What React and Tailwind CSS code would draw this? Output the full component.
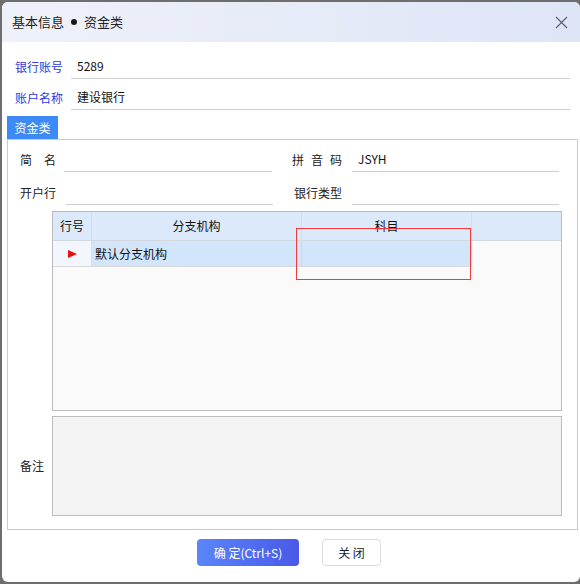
import React from "react";

const font = { fontFamily: '"Noto Sans CJK SC", "Noto Sans", sans-serif' };

const TopField = ({ label, value }) => (
  <div className="flex items-stretch h-[25px] pl-[13px] pr-[10px]">
    <div className="w-[56px] flex items-center text-[12px] text-[#3338e0]">{label}</div>
    <div className="flex-1 flex items-center pl-[6px] text-[12px] text-[#111] border-b border-[#cfcfcf]">{value}</div>
  </div>
);

const PanelField = ({ label, value, labelW, lineW }) => (
  <div className="flex items-stretch">
    <div className="flex items-center text-[12px] text-[#222] whitespace-nowrap" style={{ width: labelW }}>
      {label}
    </div>
    <div
      className="flex items-center pl-[6px] text-[12px] text-[#111] border-b border-[#cfcfcf]"
      style={{ width: lineW }}
    >
      {value}
    </div>
  </div>
);

export default function App() {
  return (
    <div className="w-[580px] h-[584px] bg-[#6e6e6e] pt-[2px] pl-[2px] overflow-hidden" style={font}>
      <div className="w-[578px] h-[580px] bg-white rounded-[6px] flex flex-col overflow-hidden">
        {/* header */}
        <div className="h-[40px] shrink-0 flex items-center justify-between pl-[10px] pr-[12px] bg-gradient-to-r from-[#eff1fa] to-[#dee5f6]">
          <span className="flex items-center text-[13px] text-[#222]">
            基本信息
            <span className="inline-block w-[6px] h-[6px] rounded-full bg-[#1a1a1a] mx-[7px]" />
            资金类
          </span>
          <svg width="13" height="13" viewBox="0 0 13 13" className="mt-[1px]">
            <path d="M1 1 L12 12 M12 1 L1 12" stroke="#5a5f70" strokeWidth="1.1" />
          </svg>
        </div>

        <div className="mt-[12px]">
          <TopField label="银行账号" value="5289" />
        </div>
        <div className="mt-[6px]">
          <TopField label="账户名称" value="建设银行" />
        </div>

        {/* tab */}
        <div className="mt-[6px] ml-[5px] w-[51px] h-[23px] bg-[#3d8af7] text-white text-[12px] flex items-center justify-center">
          资金类
        </div>

        {/* panel */}
        <div className="ml-[5px] w-[571px] h-[391px] border border-[#cccccc] pl-[12px] pt-[7px]">
          <div className="flex h-[25px]">
            <PanelField label="简　名" labelW={44} lineW={208} />
            <div className="w-[20px]" />
            <PanelField
              label={
                <span className="flex gap-[7px]">
                  <span>拼</span>
                  <span>音</span>
                  <span>码</span>
                </span>
              }
              value="JSYH"
              labelW={60}
              lineW={207}
            />
          </div>
          <div className="flex h-[25px] mt-[8px]">
            <PanelField label="开户行" labelW={46} lineW={207} />
            <div className="w-[21px]" />
            <PanelField label="银行类型" labelW={58} lineW={207} />
          </div>

          {/* grid */}
          <div className="relative mt-[6px] ml-[32px] w-[510px] h-[200px] border border-[#bcbcbc] bg-[#fafafa] text-[12px] text-[#111]">
            <div className="flex h-[29px] bg-[#dce9fa] border-b border-[#d2d8e0]">
              <div className="w-[39px] flex items-center justify-center border-r border-[#d6dde6]">行号</div>
              <div className="w-[210px] flex items-center justify-center border-r border-[#d6dde6]">分支机构</div>
              <div className="w-[170px] flex items-center justify-center border-r border-[#d6dde6]">科目</div>
              <div className="flex-1" />
            </div>
            <div className="flex h-[26px] border-b border-[#d9d9d9] w-[420px]">
              <div className="w-[39px] flex items-center justify-center bg-[#f3f7fd] border-r border-[#dddddd]">
                <svg width="9" height="8" viewBox="0 0 9 8">
                  <path d="M0 0 L9 4 L0 8 Z" fill="#e81010" />
                </svg>
              </div>
              <div className="w-[210px] flex items-center pl-[3px] bg-[#d3e5fb] border-r border-[#cfd8e3]">默认分支机构</div>
              <div className="w-[170px] bg-[#d3e5fb]" />
            </div>
            <div className="absolute left-[243px] top-[16px] w-[175px] h-[52px] border border-[#f03a3a]" />
          </div>

          {/* remarks */}
          <div className="flex items-center mt-[5px]">
            <div className="w-[32px] text-[12px] text-[#222]">备注</div>
            <div className="w-[510px] h-[100px] border border-[#bcbcbc] bg-[#f4f4f4]" />
          </div>
        </div>

        {/* buttons */}
        <div className="flex justify-center gap-[23px] mt-[9px] pr-[4px]">
          <button className="w-[102px] h-[27px] rounded-[4px] bg-gradient-to-r from-[#5b86f9] to-[#4a58e8] text-white text-[12px]">
            确 定(Ctrl+S)
          </button>
          <button className="w-[59px] h-[27px] rounded-[4px] border border-[#dcdcdc] bg-white text-[12px] text-[#222]">
            关 闭
          </button>
        </div>
      </div>
    </div>
  );
}
